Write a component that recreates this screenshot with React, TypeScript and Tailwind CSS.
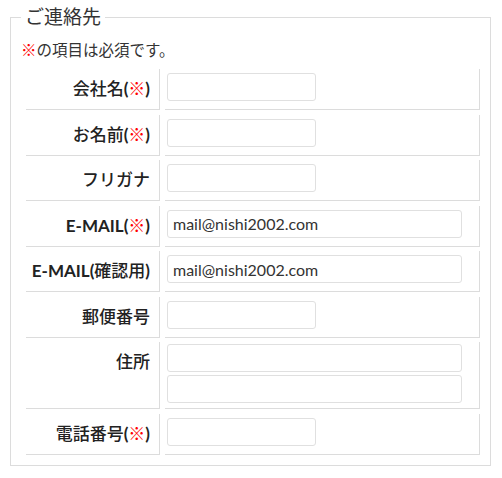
const Req = () => (
  <>
    <b className="font-bold">(</b>
    <span className="text-[#ff0000]">※</span>
    <b className="font-bold">)</b>
  </>
);

const Mail = () => <b className="font-bold">E-MAIL</b>;

type Row = {
  label: React.ReactNode;
  inputs: { wide?: boolean; value?: string }[];
};

const rows: Row[] = [
  { label: <>会社名<Req /></>, inputs: [{}] },
  { label: <>お名前<Req /></>, inputs: [{}] },
  { label: "フリガナ", inputs: [{}] },
  { label: <><Mail /><Req /></>, inputs: [{ wide: true, value: "mail@nishi2002.com" }] },
  {
    label: (
      <>
        <Mail />
        <b className="font-bold">(</b>確認用<b className="font-bold">)</b>
      </>
    ),
    inputs: [{ wide: true, value: "mail@nishi2002.com" }],
  },
  { label: "郵便番号", inputs: [{}] },
  { label: "住所", inputs: [{ wide: true }, { wide: true }] },
  { label: <>電話番号<Req /></>, inputs: [{}] },
];

const App = () => {
  return (
    <div
      className="w-[502px] h-[478px] bg-white pt-[5px] pl-[10px] text-[#333]"
      style={{ fontFamily: '"Lato", "Noto Sans CJK JP", sans-serif' }}
    >
      <fieldset className="w-[481px] border border-[#dcdcdc] px-[10px] pb-[10px]">
        <legend className="ml-0 px-[4px] text-[19px] leading-[24px]">ご連絡先</legend>
        <p className="mt-[11px] text-[15.5px] leading-[20px]">
          <span className="text-[#ff0000]">※</span>の項目は必須です。
        </p>
        <div className="mt-[9px] ml-[5px] flex flex-col gap-[4.5px]">
          {rows.map((r, i) => (
            <div key={i} className="flex gap-[5px]">
              <div className="w-[134px] border-r border-b border-[#dcdcdc] pr-[9px] pt-[10px] text-right text-[17px] font-medium leading-[20px] whitespace-nowrap text-[#222]">
                {r.label}
              </div>
              <div
                className={`w-[315px] border-r border-b border-[#dcdcdc] pl-[2px] flex flex-col gap-[3px] ${
                  r.inputs.length > 1 ? "pt-[2px] pb-[5px]" : "pt-[4px] pb-[8px]"
                }`}
              >
                {r.inputs.map((inp, j) => (
                  <input
                    key={j}
                    type="text"
                    readOnly
                    defaultValue={inp.value}
                    className={`${
                      inp.wide ? "w-[295px]" : "w-[149px]"
                    } h-[28px] rounded-[3px] border border-[#e0e0e0] bg-white px-[5px] text-[16px] text-[#333] outline-none`}
                    style={{ fontFamily: '"Lato", "Noto Sans CJK JP", sans-serif' }}
                  />
                ))}
              </div>
            </div>
          ))}
        </div>
      </fieldset>
    </div>
  );
};

export default App;
